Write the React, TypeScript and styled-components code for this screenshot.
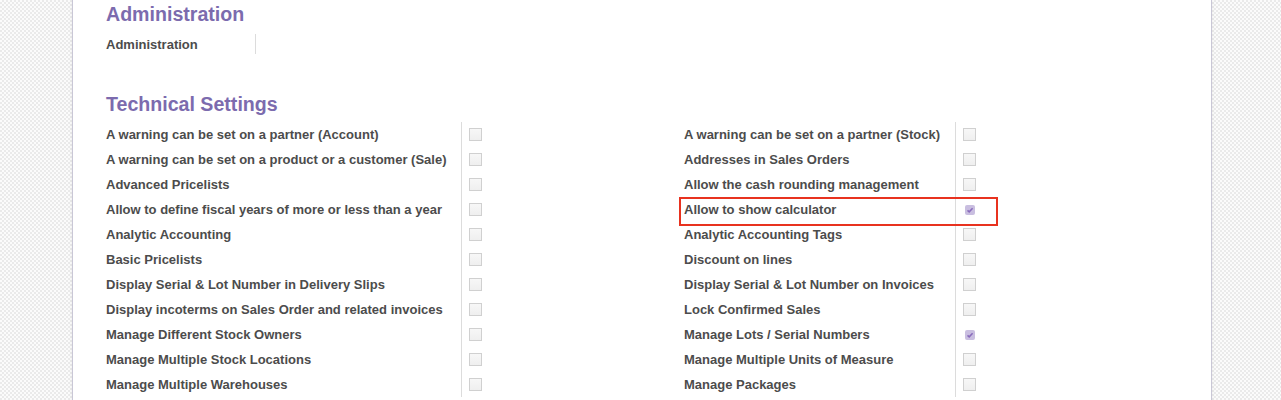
import React from "react";
import styled, { createGlobalStyle } from "styled-components";

const Global = createGlobalStyle`
  html, body { margin: 0; padding: 0; }
  body {
    font-family: "Liberation Sans", Arial, sans-serif;
    background-color: #f4f4f4;
    background-image: repeating-conic-gradient(#eaeaea 0 25%, #fbfbfb 0 50%);
    background-size: 4px 4px;
    overflow: hidden;
  }
`;

const Sheet = styled.div`
  box-sizing: border-box;
  margin-left: 72px;
  width: 1140px;
  min-height: 420px;
  background: #fff;
  border-left: 1px solid #c9c7d6;
  border-right: 1px solid #c9c7d6;
  box-shadow: 0 0 3px rgba(0, 0, 0, 0.08);
  padding: 0 25px 0 25px;
`;

const SectionTitle = styled.h2<{ $top: number }>`
  margin: ${(p) => p.$top}px 0 0 8px;
  font-size: 19.6px;
  line-height: 28px;
  font-weight: bold;
  color: #7c6bae;
`;

const AdminRow = styled.div`
  display: grid;
  grid-template-columns: 157px 1fr;
  height: 20px;
  margin-top: 6px;
`;

const Label = styled.div`
  position: relative;
  padding-left: 8px;
  font-size: 13px;
  font-weight: bold;
  color: #4c4c4c;
  display: flex;
  align-items: center;
  white-space: nowrap;
`;

const ValueCell = styled.div`
  border-left: 1px solid #dcdcdc;
  padding-left: 7px;
  display: flex;
  align-items: center;
`;

const SettingsGrid = styled.div`
  display: grid;
  grid-template-columns: 363px 215px 279px 1fr;
  grid-auto-rows: 25px;
  margin-top: 4px;
`;

const Box = styled.span<{ $checked?: boolean }>`
  box-sizing: border-box;
  width: 13px;
  height: 13px;
  display: flex;
  align-items: center;
  justify-content: center;
  border: 1px solid #d0d0d0;
  background: linear-gradient(#f7f7f7, #efefef);
  ${(p) =>
    p.$checked &&
    `
    border: none;
    background: transparent;
  `}
`;

const CheckFill = styled.span`
  width: 10px;
  height: 10px;
  border-radius: 2px;
  background: #c9bee0;
  display: flex;
  align-items: center;
  justify-content: center;
`;

const Highlight = styled.div`
  position: absolute;
  left: 3px;
  top: 0px;
  width: 319px;
  height: 29px;
  box-sizing: border-box;
  border: 2px solid #e8321f;
  pointer-events: none;
`;

type Item = { label: string; checked?: boolean; highlight?: boolean };

const left: Item[] = [
  { label: "A warning can be set on a partner (Account)" },
  { label: "A warning can be set on a product or a customer (Sale)" },
  { label: "Advanced Pricelists" },
  { label: "Allow to define fiscal years of more or less than a year" },
  { label: "Analytic Accounting" },
  { label: "Basic Pricelists" },
  { label: "Display Serial & Lot Number in Delivery Slips" },
  { label: "Display incoterms on Sales Order and related invoices" },
  { label: "Manage Different Stock Owners" },
  { label: "Manage Multiple Stock Locations" },
  { label: "Manage Multiple Warehouses" },
];

const right: Item[] = [
  { label: "A warning can be set on a partner (Stock)" },
  { label: "Addresses in Sales Orders" },
  { label: "Allow the cash rounding management" },
  { label: "Allow to show calculator", checked: true, highlight: true },
  { label: "Analytic Accounting Tags" },
  { label: "Discount on lines" },
  { label: "Display Serial & Lot Number on Invoices" },
  { label: "Lock Confirmed Sales" },
  { label: "Manage Lots / Serial Numbers", checked: true },
  { label: "Manage Multiple Units of Measure" },
  { label: "Manage Packages" },
];

const Checkbox = ({ checked }: { checked?: boolean }) => (
  <Box $checked={checked}>
    {checked && (
      <CheckFill>
        <svg width="8" height="8" viewBox="0 0 8 8">
          <path d="M1.5 4.3 L3.2 5.8 L6.6 2.3" fill="none" stroke="#8a6cbc" strokeWidth="1.6" />
        </svg>
      </CheckFill>
    )}
  </Box>
);

export default function App() {
  return (
    <>
      <Global />
      <Sheet>
        <SectionTitle $top={0}>Administration</SectionTitle>
        <AdminRow>
          <Label>Administration</Label>
          <ValueCell />
        </AdminRow>
        <SectionTitle $top={36}>Technical Settings</SectionTitle>
        <SettingsGrid>
          {left.map((l, i) => {
            const r = right[i];
            return (
              <React.Fragment key={i}>
                <Label>{l.label}</Label>
                <ValueCell>
                  <Checkbox checked={l.checked} />
                </ValueCell>
                <Label>
                  {r.label}
                  {r.highlight && <Highlight />}
                </Label>
                <ValueCell>
                  <Checkbox checked={r.checked} />
                </ValueCell>
              </React.Fragment>
            );
          })}
        </SettingsGrid>
      </Sheet>
    </>
  );
}
